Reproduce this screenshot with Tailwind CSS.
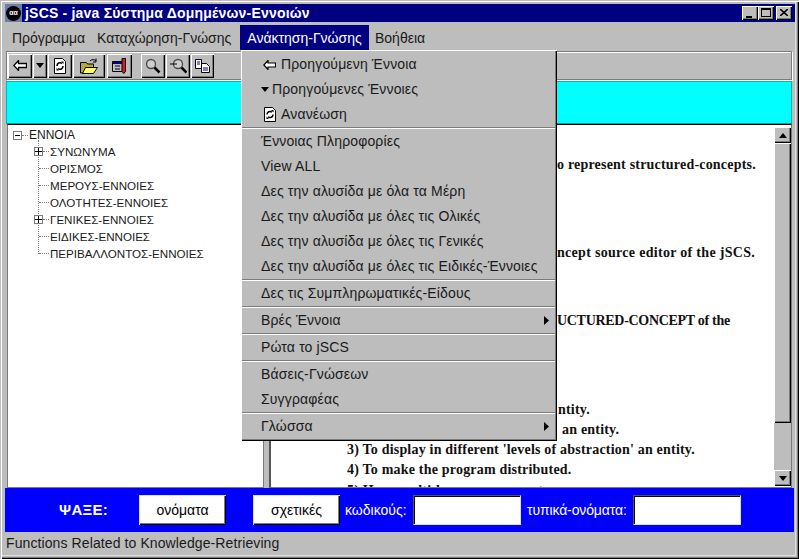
<!DOCTYPE html>
<html>
<head>
<meta charset="utf-8">
<script src="https://cdn.jsdelivr.net/npm/@tailwindcss/browser@4"></script>
</head>
<body class="m-0 overflow-hidden bg-black">
<div class="relative w-[799px] h-[559px] bg-[#bdbdbd] flex flex-col pt-[4px] pl-[5px] pr-[4px] pb-[6px] shadow-[inset_1px_1px_0_#bdbdbd,inset_2px_2px_0_#fff,inset_-1px_-1px_0_#000,inset_-2px_-2px_0_#7b7b7b,inset_-3px_-3px_0_#bdbdbd,inset_-4px_-4px_0_#dedede] font-['Liberation_Sans',sans-serif] text-black">

  <!-- title bar -->
  <div class="h-[18px] bg-[#000080] flex items-center shrink-0">
    <div class="w-[17px] h-[18px] bg-[#6b7fa8] flex items-center justify-center shrink-0">
      <div class="w-[15px] h-[15px] rounded-full bg-black text-white text-[7px] leading-[14px] text-center font-bold">αα</div>
    </div>
    <span class="ml-[3px] text-white font-bold text-[14px] tracking-[0.2px] whitespace-nowrap">jSCS - java Σύστημα Δομημένων-Εννοιών</span>
    <div class="ml-auto flex mr-[3px]">
      <div class="w-[16px] h-[14px] bg-[#bdbdbd] flex items-end justify-center pb-[2px] shadow-[inset_1px_1px_0_#fff,inset_-1px_-1px_0_#000,inset_-2px_-2px_0_#7b7b7b]"><div class="w-[6px] h-[2px] bg-black mr-[2px]"></div></div>
      <div class="w-[16px] h-[14px] bg-[#bdbdbd] flex items-center justify-center shadow-[inset_1px_1px_0_#fff,inset_-1px_-1px_0_#000,inset_-2px_-2px_0_#7b7b7b]"><div class="w-[10px] h-[9px] border border-black border-t-2 -mt-[1px] -ml-[1px]"></div></div>
      <div class="ml-[2px] w-[16px] h-[14px] bg-[#bdbdbd] flex items-center justify-center shadow-[inset_1px_1px_0_#fff,inset_-1px_-1px_0_#000,inset_-2px_-2px_0_#7b7b7b]">
        <svg width="8" height="7" viewBox="0 0 8 7" class="-mt-[1px]"><path d="M0 0L8 7M8 0L0 7" stroke="#000" stroke-width="1.6"/></svg>
      </div>
    </div>
  </div>

  <!-- menu bar -->
  <div class="h-[29px] pt-[3px] flex text-[14px] shrink-0">
    <div class="w-[85px] pl-[7px] h-[25px] leading-[26px] text-[#1a1a1a] whitespace-nowrap">Πρόγραμμα</div>
    <div class="w-[150px] pl-[7px] h-[25px] leading-[26px] text-[#1a1a1a] whitespace-nowrap">Καταχώρηση-Γνώσης</div>
    <div class="w-[129px] h-[25px] leading-[26px] text-center bg-[#000080] text-white">Ανάκτηση-Γνώσης</div>
    <div class="pl-[6px] h-[25px] leading-[26px] text-[#1a1a1a]">Βοήθεια</div>
  </div>

  <!-- toolbar -->
  <div class="h-[29px] ml-[1px] mr-[3px] mb-[1px] shrink-0 flex items-center pl-[1px] border border-[#7b7b7b] shadow-[inset_1px_1px_0_#fff,1px_1px_0_#fff]">
    <button class="w-[24px] h-[24px] bg-[#bdbdbd] flex items-center justify-center shadow-[inset_1px_1px_0_#fff,inset_-1px_-1px_0_#000,inset_-2px_-2px_0_#7b7b7b]">
      <svg width="14" height="11" viewBox="0 0 14 11"><path d="M5.500 .5L.8 5.500l4.700 5V7.500h8v-4h-8z" fill="#fff" stroke="#000" stroke-width="1.300"/></svg>
    </button>
    <button class="ml-[1px] w-[14px] h-[24px] bg-[#bdbdbd] flex items-center justify-center shadow-[inset_1px_1px_0_#fff,inset_-1px_-1px_0_#000,inset_-2px_-2px_0_#7b7b7b]">
      <svg width="8" height="5" viewBox="0 0 8 5"><path d="M0 0h8L4 5z"/></svg>
    </button>
    <button class="ml-[1px] w-[24px] h-[24px] bg-[#bdbdbd] flex items-center justify-center shadow-[inset_1px_1px_0_#fff,inset_-1px_-1px_0_#000,inset_-2px_-2px_0_#7b7b7b]">
      <svg width="12" height="16" viewBox="0 0 12 16"><path d="M.5 .5h8l3 3v12H.5z" fill="#fff" stroke="#000"/><path d="M3 8a3 3 0 0 1 5-2.500M9 8a3 3 0 0 1-5 2.500" fill="none" stroke="#000" stroke-width="1.500"/><path d="M7 3.500h2.500V6zM5 12.500H2.500V10z"/></svg>
    </button>
    <button class="ml-[1px] w-[32px] h-[24px] bg-[#bdbdbd] flex items-center justify-center shadow-[inset_1px_1px_0_#fff,inset_-1px_-1px_0_#000,inset_-2px_-2px_0_#7b7b7b]">
      <svg width="18" height="16" viewBox="0 0 18 16"><path d="M.5 4.500h6l1 1.500h6v9H.5z" fill="#b5a642" stroke="#000"/><path d="M2.500 15.500l3-6h12l-4 6z" fill="#ffff66" stroke="#000"/><path d="M10 3a4 4 0 0 1 6 0" fill="none" stroke="#000"/><path d="M16 .5V4h-3" fill="none" stroke="#000"/></svg>
    </button>
    <button class="ml-[2px] w-[25px] h-[24px] bg-[#bdbdbd] flex items-center justify-center shadow-[inset_1px_1px_0_#fff,inset_-1px_-1px_0_#000,inset_-2px_-2px_0_#7b7b7b]">
      <svg width="16" height="16" viewBox="0 0 16 16"><path d="M.5 3.500h12v10H.5z" fill="#bdbdbd" stroke="#000"/><path d="M1 4h11v2H1z" fill="#000080"/><path d="M3 8h5M3 11h5" stroke="#000"/><path d="M10 .5h3.500v13l-1.700 2-1.800-2z" fill="#d02020" stroke="#000"/></svg>
    </button>
    <button class="ml-[9px] w-[24px] h-[24px] bg-[#bdbdbd] flex items-center justify-center shadow-[inset_1px_1px_0_#fff,inset_-1px_-1px_0_#000,inset_-2px_-2px_0_#7b7b7b]">
      <svg width="16" height="16" viewBox="0 0 16 16"><circle cx="6" cy="6" r="4.500" fill="#cfcfcf" stroke="#4a4a4a" stroke-width="1.300"/><path d="M9.500 9.500l5 5" stroke="#000" stroke-width="2.500"/></svg>
    </button>
    <button class="ml-[1px] w-[24px] h-[24px] bg-[#bdbdbd] flex items-center justify-center shadow-[inset_1px_1px_0_#fff,inset_-1px_-1px_0_#000,inset_-2px_-2px_0_#7b7b7b]">
      <svg width="17" height="16" viewBox="0 0 17 16"><circle cx="8" cy="6" r="4.500" fill="#cfcfcf" stroke="#4a4a4a" stroke-width="1.300"/><path d="M0 6h7" stroke="#000"/><path d="M11.500 9.500l5 5" stroke="#000" stroke-width="2.500"/></svg>
    </button>
    <button class="ml-[1px] w-[23px] h-[24px] bg-[#bdbdbd] flex items-center justify-center shadow-[inset_1px_1px_0_#fff,inset_-1px_-1px_0_#000,inset_-2px_-2px_0_#7b7b7b]">
      <svg width="15" height="14" viewBox="0 0 15 14"><path d="M.5 .5h6v9h-6z" fill="#fff" stroke="#000"/><path d="M6.500 4.500h5l3 3v6h-8z" fill="#fff" stroke="#000"/><path d="M2 3h3M2 5h3M8 9h5M8 11h5" stroke="#000080"/></svg>
    </button>
  </div>

  <!-- cyan band -->
  <div class="h-[43px] ml-[1px] mr-[3px] shrink-0 bg-[#00ffff] border border-[#00b5b5] border-b-[#00a0a0]"></div>

  <!-- main split -->
  <div class="h-[364px] shrink-0 flex pl-[2px] pr-[3px]">
    <!-- tree -->
    <div class="w-[257px] bg-white border border-[#7b7b7b] border-t-[#000] pt-[2px] pl-[5px] text-[11.600px] leading-[17px] text-[#1a1a1a] relative whitespace-nowrap">
      <div class="absolute left-[30px] top-[15px] h-[114px] border-l border-dotted border-[#7b7b7b]"></div>
      <div class="flex items-center h-[16px]">
        <span class="w-[9px] h-[9px] border border-[#7b7b7b] flex items-center justify-center bg-white"><span class="w-[5px] h-[1px] bg-black"></span></span>
        <span class="w-[6px] border-t border-dotted border-[#7b7b7b]"></span>
        <span class="ml-[1px] text-[12px]">ΕΝΝΟΙΑ</span>
      </div>
      <div class="flex items-center h-[17px] pl-[21px] relative">
        <span class="w-[9px] h-[9px] border border-[#7b7b7b] flex items-center justify-center bg-white relative z-10"><svg width="7" height="7" viewBox="0 0 7 7"><path d="M0 3.500h7M3.500 0v7" stroke="#000"/></svg></span>
        <span class="w-[6px] border-t border-dotted border-[#7b7b7b]"></span>
        <span class="ml-[1px]">ΣΥΝΩΝΥΜΑ</span>
      </div>
      <div class="flex items-center h-[17px] pl-[26px]"><span class="w-[10px] border-t border-dotted border-[#7b7b7b]"></span><span class="ml-[1px]">ΟΡΙΣΜΟΣ</span></div>
      <div class="flex items-center h-[17px] pl-[26px]"><span class="w-[10px] border-t border-dotted border-[#7b7b7b]"></span><span class="ml-[1px]">ΜΕΡΟΥΣ-ΕΝΝΟΙΕΣ</span></div>
      <div class="flex items-center h-[17px] pl-[26px]"><span class="w-[10px] border-t border-dotted border-[#7b7b7b]"></span><span class="ml-[1px]">ΟΛΟΤΗΤΕΣ-ΕΝΝΟΙΕΣ</span></div>
      <div class="flex items-center h-[17px] pl-[21px] relative">
        <span class="w-[9px] h-[9px] border border-[#7b7b7b] flex items-center justify-center bg-white relative z-10"><svg width="7" height="7" viewBox="0 0 7 7"><path d="M0 3.500h7M3.500 0v7" stroke="#000"/></svg></span>
        <span class="w-[6px] border-t border-dotted border-[#7b7b7b]"></span>
        <span class="ml-[1px]">ΓΕΝΙΚΕΣ-ΕΝΝΟΙΕΣ</span>
      </div>
      <div class="flex items-center h-[17px] pl-[26px]"><span class="w-[10px] border-t border-dotted border-[#7b7b7b]"></span><span class="ml-[1px]">ΕΙΔΙΚΕΣ-ΕΝΝΟΙΕΣ</span></div>
      <div class="flex items-center h-[17px] pl-[26px]"><span class="w-[10px] border-t border-dotted border-[#7b7b7b]"></span><span class="ml-[1px]">ΠΕΡΙΒΑΛΛΟΝΤΟΣ-ΕΝΝΟΙΕΣ</span></div>
    </div>
    <div class="w-[5px] shrink-0"></div>
    <!-- content -->
    <div class="w-[523px] flex bg-white border border-[#7b7b7b] border-l-2 border-l-[#555] border-t-[#000] overflow-hidden">
      <div class="flex-1 overflow-hidden font-['Liberation_Serif',serif] font-bold text-[14px] tracking-[0.2px] leading-[20px] whitespace-nowrap text-[#111]">
        <p class="mt-[30px] pl-[286px]">o represent structured-concepts.</p>
        <p class="mt-[68px] pl-[286px] tracking-[0.3px]">ncept source editor of the jSCS.</p>
        <p class="mt-[48px] pl-[286px] tracking-[-0.3px]">UCTURED-CONCEPT of the</p>
        <p class="mt-[69px] pl-[287px]">ntity.</p>
        <p class="pl-[291px]">an entity.</p>
        <p class="pl-[76px]">3) To display in different 'levels of abstraction' an entity.</p>
        <p class="pl-[76px]">4) To make the program distributed.</p>
        <p class="pl-[76px] mt-[1px]">5) Have multi-language support.</p>
      </div>
      <div class="w-[17px] shrink-0 mt-[2px] mb-[1px] bg-[#bdbdbd] flex flex-col">
        <div class="h-[16px] shrink-0 flex items-center justify-center shadow-[inset_1px_1px_0_#fff,inset_-1px_-1px_0_#000,inset_-2px_-2px_0_#7b7b7b]"><svg width="8" height="5" viewBox="0 0 8 5"><path d="M4 0l4 5H0z"/></svg></div>
        <div class="h-[280px] shrink-0 shadow-[inset_1px_1px_0_#fff,inset_-1px_-1px_0_#000,inset_-2px_-2px_0_#7b7b7b]"></div>
        <div class="h-[16px] mt-auto shrink-0 flex items-center justify-center shadow-[inset_1px_1px_0_#fff,inset_-1px_-1px_0_#000,inset_-2px_-2px_0_#7b7b7b]"><svg width="8" height="5" viewBox="0 0 8 5"><path d="M0 0h8L4 5z"/></svg></div>
      </div>
    </div>
  </div>

  <!-- blue search bar -->
  <div class="h-[44px] mr-[1px] shrink-0 bg-[#0000ff] flex items-center text-white text-[14px] whitespace-nowrap">
    <span class="w-[134px] pl-[54px] font-bold text-[15px] tracking-[0.3px]">ΨΑΞΕ:</span>
    <button class="w-[87px] h-[30px] bg-white text-black text-[14px] shadow-[inset_1px_1px_0_#ddd,inset_-1px_-1px_0_#000,inset_-2px_-2px_0_#7b7b7b]">ονόματα</button>
    <button class="ml-[27px] w-[87px] h-[30px] bg-white text-black text-[14px] shadow-[inset_1px_1px_0_#ddd,inset_-1px_-1px_0_#000,inset_-2px_-2px_0_#7b7b7b]">σχετικές</button>
    <span class="ml-[5px] w-[62px]">κωδικούς:</span>
    <div class="ml-[6px] w-[108px] h-[30px] bg-white border border-[#555] border-r-[#ddd] border-b-[#ddd] shadow-[inset_1px_1px_0_#000]"></div>
    <span class="ml-[6px] w-[100px] tracking-[-0.13px]">τυπικά-ονόματα:</span>
    <div class="ml-[6px] w-[108px] h-[30px] bg-white border border-[#555] border-r-[#ddd] border-b-[#ddd] shadow-[inset_1px_1px_0_#000]"></div>
  </div>

  <!-- status -->
  <div class="h-[21px] shrink-0 text-[14px] leading-[22px] pl-[1px] tracking-[0.1px] text-[#1a1a1a] whitespace-nowrap">Functions Related to Knowledge-Retrieving</div>

  <!-- dropdown menu -->
  <div class="absolute left-[241px] top-[50px] w-[316px] pt-[2px] bg-[#bdbdbd] text-[14px] text-[#1a1a1a] tracking-[0.15px] whitespace-nowrap shadow-[inset_1px_1px_0_#fff,inset_-1px_-1px_0_#000,inset_-2px_-2px_0_#7b7b7b]">
    <div class="h-[25px] leading-[25px] pl-[22px] flex items-center"><svg width="13" height="10" viewBox="0 0 13 10" class="mr-[5px]"><path d="M5 .5L.8 5 5 9.500V7h7.500V3H5z" fill="#fff" stroke="#000" stroke-width="1.200"/></svg>Προηγούμενη Έννοια</div>
    <div class="h-[25px] leading-[25px] pl-[20px] flex items-center"><svg width="8" height="5" viewBox="0 0 8 5" class="mr-[3px]"><path d="M0 0h8L4 5z"/></svg>Προηγούμενες Έννοιες</div>
    <div class="h-[25px] leading-[25px] pl-[23px] flex items-center"><svg width="12" height="15" viewBox="0 0 12 15" class="mr-[5px]"><path d="M.5 .5h8l3 3v11H.5z" fill="#fff" stroke="#000"/><path d="M3 7.500a3 3 0 0 1 5-2.300M9 7.500a3 3 0 0 1-5 2.300" fill="none" stroke="#000" stroke-width="1.500"/><path d="M7 3h2.500v2.500zM5 12H2.500V9.500z"/></svg>Ανανέωση</div>
    <div class="h-[2px] mr-[2px] ml-[1px] bg-[#7b7b7b] border-b border-white"></div>
    <div class="h-[25px] leading-[25px] pl-[20px]">Έννοιας Πληροφορίες</div>
    <div class="h-[25px] leading-[25px] pl-[20px]">View ALL</div>
    <div class="h-[25px] leading-[25px] pl-[20px]">Δες την αλυσίδα με όλα τα Μέρη</div>
    <div class="h-[25px] leading-[25px] pl-[20px]">Δες την αλυσίδα με όλες τις Ολικές</div>
    <div class="h-[25px] leading-[25px] pl-[20px]">Δες την αλυσίδα με όλες τις Γενικές</div>
    <div class="h-[25px] leading-[25px] pl-[20px]">Δες την αλυσίδα με όλες τις Ειδικές-Έννοιες</div>
    <div class="h-[2px] mr-[2px] ml-[1px] bg-[#7b7b7b] border-b border-white"></div>
    <div class="h-[25px] leading-[25px] pl-[20px]">Δες τις Συμπληρωματικές-Είδους</div>
    <div class="h-[2px] mr-[2px] ml-[1px] bg-[#7b7b7b] border-b border-white"></div>
    <div class="h-[25px] leading-[25px] pl-[20px] pr-[8px] flex items-center justify-between">Βρές Έννοια<svg width="5" height="9" viewBox="0 0 5 9"><path d="M0 0l5 4.500L0 9z"/></svg></div>
    <div class="h-[2px] mr-[2px] ml-[1px] bg-[#7b7b7b] border-b border-white"></div>
    <div class="h-[25px] leading-[25px] pl-[20px]">Ρώτα το jSCS</div>
    <div class="h-[2px] mr-[2px] ml-[1px] bg-[#7b7b7b] border-b border-white"></div>
    <div class="h-[25px] leading-[25px] pl-[20px]">Βάσεις-Γνώσεων</div>
    <div class="h-[25px] leading-[25px] pl-[20px]">Συγγραφέας</div>
    <div class="h-[2px] mr-[2px] ml-[1px] bg-[#7b7b7b] border-b border-white"></div>
    <div class="h-[25px] leading-[25px] pl-[20px] pr-[8px] flex items-center justify-between">Γλώσσα<svg width="5" height="9" viewBox="0 0 5 9"><path d="M0 0l5 4.500L0 9z"/></svg></div>
    <div class="h-[2px]"></div>
  </div>
</div>
</body>
</html>
